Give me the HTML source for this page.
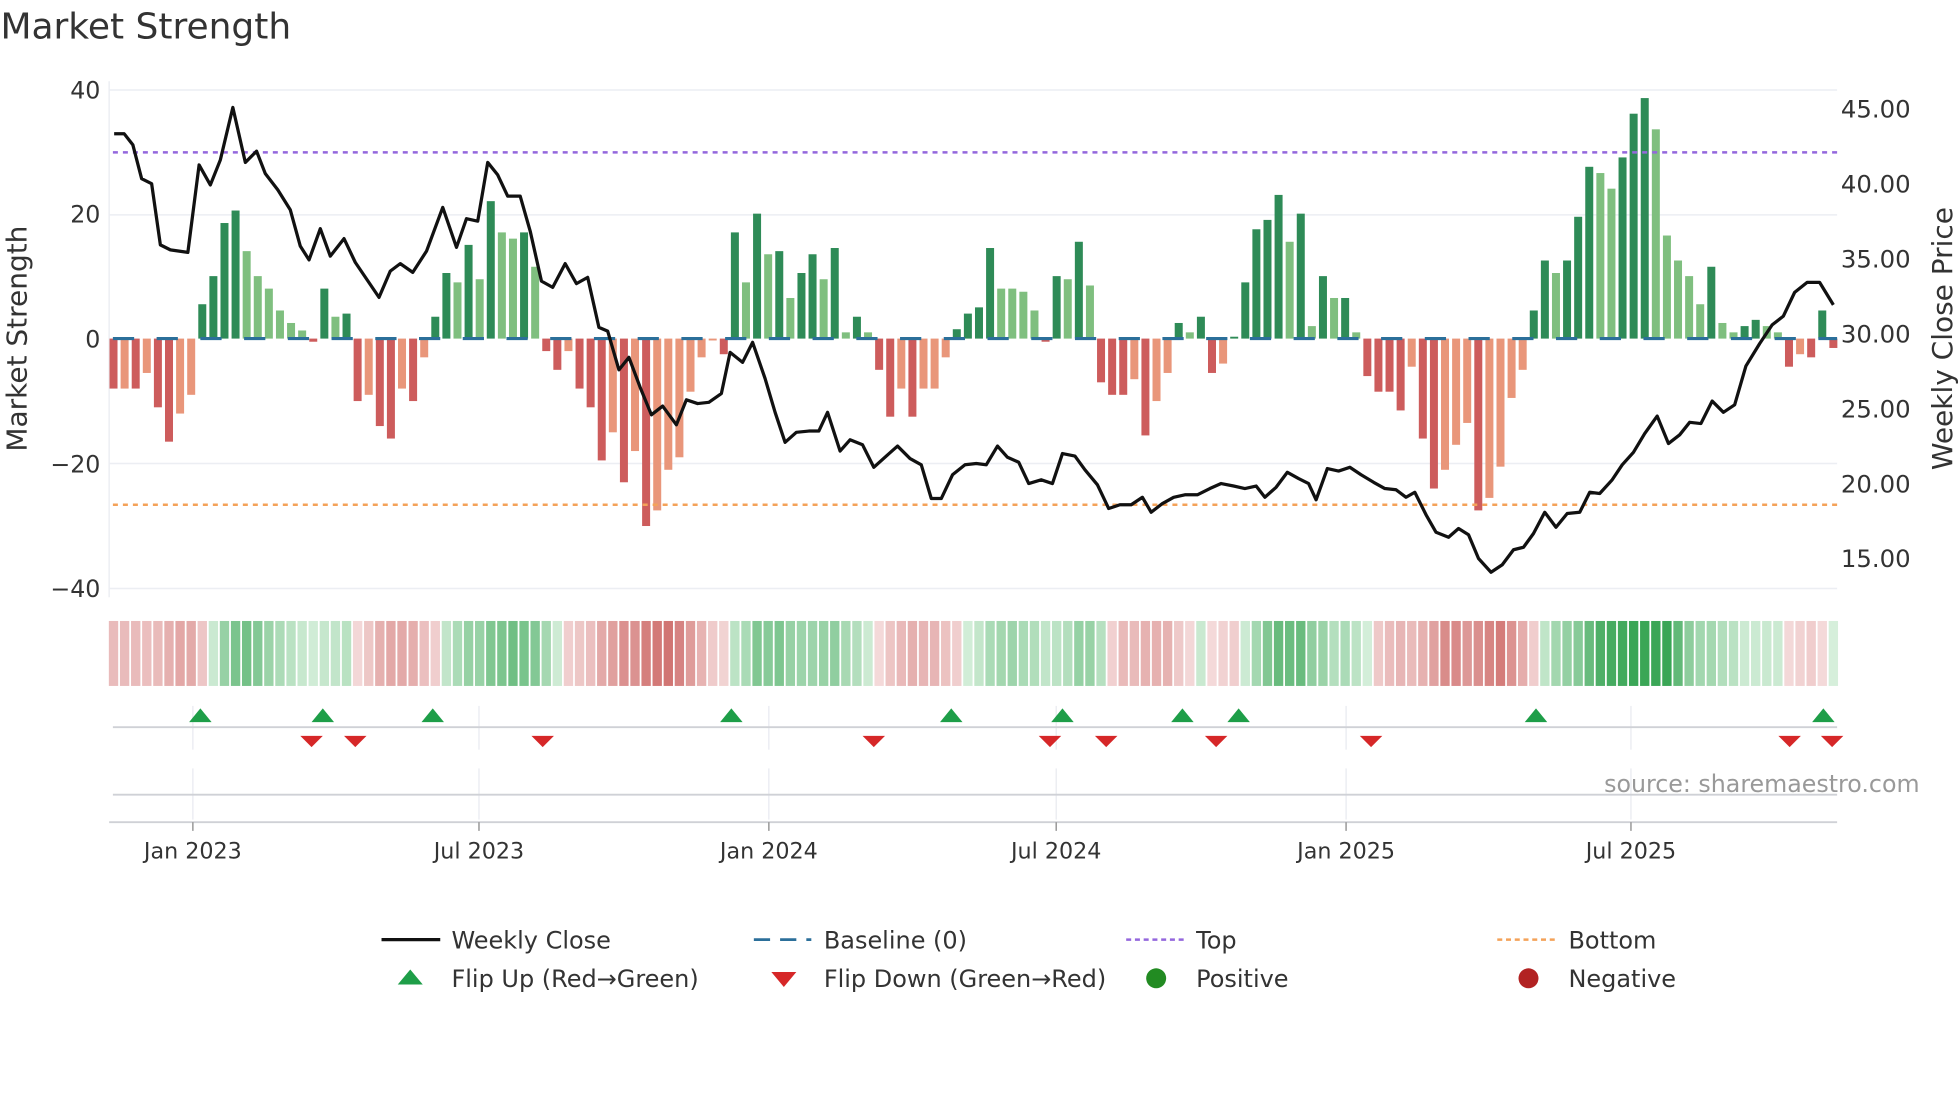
<!DOCTYPE html>
<html><head><meta charset="utf-8">
<style>
html,body{margin:0;padding:0;background:#fff;}
svg{display:block;font-family:"DejaVu Sans","Liberation Sans",sans-serif;}
</style></head>
<body>
<svg id="s" width="1960" height="1102" viewBox="0 0 1568 882" xmlns="http://www.w3.org/2000/svg">
<rect width="1568" height="882" fill="#fff"/>
<text x="0" y="31" font-size="28.8" fill="#333">Market Strength</text>
<g stroke="#eceef3" stroke-width="1.2">
<line x1="87" y1="72" x2="1470" y2="72"/>
<line x1="87" y1="172" x2="1470" y2="172"/>
<line x1="87" y1="371" x2="1470" y2="371"/>
<line x1="87" y1="471" x2="1470" y2="471"/>
<line x1="87" y1="65" x2="87" y2="478"/>
</g>
<g font-size="19" fill="#333" text-anchor="end">
<text x="80" y="79">40</text><text x="80" y="178">20</text><text x="80" y="278">0</text>
<text x="80" y="378">−20</text><text x="80" y="478">−40</text>
</g>
<g font-size="19.5" fill="#333">
<text x="1473" y="94">45.00</text><text x="1473" y="154">40.00</text><text x="1473" y="214">35.00</text>
<text x="1473" y="274">30.00</text><text x="1473" y="334">25.00</text><text x="1473" y="394">20.00</text>
<text x="1473" y="454">15.00</text>
</g>
<text transform="translate(21,271) rotate(-90)" font-size="22.4" fill="#333" text-anchor="middle">Market Strength</text>
<text transform="translate(1562,271) rotate(-90)" font-size="22.4" fill="#333" text-anchor="middle">Weekly Close Price</text>
<g id="bars"></g>
<line x1="90" y1="271" x2="1470" y2="271" stroke="#2b6f9a" stroke-width="2.5" stroke-dasharray="17 18"/>
<line x1="90" y1="122" x2="1470" y2="122" stroke="#9467dd" stroke-width="2" stroke-dasharray="4 4"/>
<line x1="90" y1="404" x2="1470" y2="404" stroke="#f4a259" stroke-width="2" stroke-dasharray="4 4"/>
<polyline fill="none" stroke="#111" stroke-width="2.6" stroke-linejoin="round" points="91,107 99,107 106,116 113,143 121,147 128,196 136,200 150,202 159,132 168,148 176,128 186,86 196,130 205,121 212,139 222,152 232,168 240,197 247,208 256,183 264,205 275,191 284,210 303,238 312,217 320,211 330,218 341,201 354,166 365,198 373,175 382,177 390,130 398,140 406,157 416,157 424,185 433,225 442,230 452,211 461,227 470,222 479,262 486,265 495,296 503,286 512,310 521,332 530,325 541,340 549,320 558,323 567,322 577,315 584,282 594,290 602,274 612,303 620,330 628,354 637,346 647,345 655,345 662,330 672,361 680,352 690,356 699,374 709,365 718,357 728,367 737,372 745,399 753,399 762,380 772,372 781,371 789,372 798,357 806,366 815,370 823,387 833,384 842,387 850,363 860,365 868,376 878,388 887,407 896,404 905,404 914,398 921,410 930,403 939,398 948,396 958,396 968,391 977,387 987,389 996,391 1005,389 1012,398 1021,390 1030,378 1039,383 1047,387 1053,400 1062,375 1071,377 1080,374 1089,380 1099,386 1108,391 1117,392 1125,398 1132,394 1141,412 1149,426 1159,430 1167,423 1175,428 1183,447 1193,458 1202,452 1211,440 1219,438 1227,427 1236,410 1245,422 1254,411 1264,410 1272,394 1280,395 1290,384 1298,372 1307,362 1316,347 1326,333 1335,355 1344,348 1352,338 1361,339 1370,321 1379,330 1388,324 1397,293 1408,275 1418,260 1427,253 1436,234 1446,226 1456,226 1467,244"/>
<g id="strip"></g>
<g stroke="#e8eaf0" stroke-width="1">
<line x1="154" y1="565" x2="154" y2="600"/><line x1="383" y1="565" x2="383" y2="600"/><line x1="615" y1="565" x2="615" y2="600"/><line x1="845" y1="565" x2="845" y2="600"/><line x1="1077" y1="565" x2="1077" y2="600"/><line x1="1305" y1="565" x2="1305" y2="600"/>
<line x1="154" y1="615" x2="154" y2="656"/><line x1="383" y1="615" x2="383" y2="656"/><line x1="615" y1="615" x2="615" y2="656"/><line x1="845" y1="615" x2="845" y2="656"/><line x1="1077" y1="615" x2="1077" y2="656"/><line x1="1305" y1="615" x2="1305" y2="656"/>
</g>
<line x1="90" y1="582" x2="1470" y2="582" stroke="#cfd1d6" stroke-width="1.5"/>
<line x1="90" y1="636" x2="1470" y2="636" stroke="#cfd1d6" stroke-width="1.5"/>
<line x1="87" y1="658" x2="1470" y2="658" stroke="#cfd1d6" stroke-width="1.5"/>
<g stroke="#999" stroke-width="1.2">
<line x1="154" y1="658" x2="154" y2="665"/><line x1="383" y1="658" x2="383" y2="665"/><line x1="615" y1="658" x2="615" y2="665"/><line x1="845" y1="658" x2="845" y2="665"/><line x1="1077" y1="658" x2="1077" y2="665"/><line x1="1305" y1="658" x2="1305" y2="665"/>
</g>
<g id="flips"></g>
<text x="1536" y="634" font-size="19" fill="#999" text-anchor="end">source: sharemaestro.com</text>
<g font-size="17.8" fill="#333" text-anchor="middle">
<text x="154" y="687">Jan 2023</text><text x="383" y="687">Jul 2023</text><text x="615" y="687">Jan 2024</text>
<text x="845" y="687">Jul 2024</text><text x="1077" y="687">Jan 2025</text><text x="1305" y="687">Jul 2025</text>
</g>
<g font-size="19.2" fill="#333">
<line x1="305" y1="752" x2="352" y2="752" stroke="#111" stroke-width="2.6"/>
<text x="361" y="759">Weekly Close</text>
<line x1="603" y1="752" x2="649" y2="752" stroke="#2b6f9a" stroke-width="2.2" stroke-dasharray="13 8"/>
<text x="659" y="759">Baseline (0)</text>
<line x1="901" y1="752" x2="947" y2="752" stroke="#9467dd" stroke-width="2" stroke-dasharray="4 3"/>
<text x="957" y="759">Top</text>
<line x1="1198" y1="752" x2="1244" y2="752" stroke="#f4a259" stroke-width="2" stroke-dasharray="4 3"/>
<text x="1255" y="759">Bottom</text>
<polygon points="318,788 338,788 328,776" fill="#1e9e48"/>
<text x="361" y="790">Flip Up (Red→Green)</text>
<polygon points="617,778 637,778 627,790" fill="#d62728"/>
<text x="659" y="790">Flip Down (Green→Red)</text>
<circle cx="925" cy="783" r="8" fill="#228b22"/>
<text x="957" y="790">Positive</text>
<circle cx="1223" cy="783" r="8" fill="#b22222"/>
<text x="1255" y="790">Negative</text>
</g>
</svg>
<script>
var NS="http://www.w3.org/2000/svg";
var B="-8d -8l -8d -5.5l -11d -16.5d -12l -9l 5.5d 10d 18.5d 20.5d 14l 10l 8l 4.5l 2.5l 1.3l -0.5d 8d 3.5l 4d -10d -9l -14d -16d -8l -10d -3l 3.5d 10.5d 9l 15d 9.5l 22d 17l 16l 17d 11.5l -2d -5d -2l -8d -11d -19.5d -15l -23d -18l -30d -27.5l -21l -19l -8.5l -3l -0.3l -2.5d 17d 9l 20d 13.5l 14d 6.5l 10.5d 13.5d 9.5l 14.5d 1l 3.5d 1l -5d -12.5d -8l -12.5d -8l -8l -3l 1.5d 4d 5d 14.5d 8l 8l 7.5l 4.5l -0.5d 10d 9.5l 15.5d 8.5l -7d -9d -9d -6.5l -15.5d -10l -5.5l 2.5d 1l 3.5d -5.5d -4l 0.3d 9d 17.5d 19d 23d 15.5l 20d 2l 10d 6.5l 6.5d 1l -6d -8.5d -8.5d -11.5d -4.5l -16d -24d -21l -17l -13.5l -27.5d -25.5l -20.5l -9.5l -5l 4.5d 12.5d 10.5l 12.5d 19.5d 27.5d 26.5l 24l 29d 36d 38.5d 33.5l 16.5l 12.5l 10l 5.5l 11.5d 2.5l 1l 2d 3d 2l 1l -4.5d -2.5l -3d 4.5d -1.5d".split(" ");
var n=B.length,x0=90.5,x1=1467,step=(x1-x0)/(n-1),w=6.4;
var bars=document.getElementById("bars"),strip=document.getElementById("strip");
function mix(a,b,t){var r="#";for(var i=0;i<3;i++){var c=Math.round(parseInt(a.substr(1+2*i,2),16)*(1-t)+parseInt(b.substr(1+2*i,2),16)*t);r+=(c<16?"0":"")+c.toString(16);}return r;}
var sm=[];
for(var i=0;i<n;i++){sm.push(parseFloat(B[i]));}
for(var i=0;i<n;i++){
 var v=parseFloat(B[i]),t=B[i].slice(-1),cx=x0+i*step;
 var col=v>=0?(t=="d"?"#2e8b57":"#7fbf7f"):(t=="d"?"#cd5c5c":"#e9967a");
 var r=document.createElementNS(NS,"rect");
 var h=Math.max(Math.abs(v)*5,1.2);
 r.setAttribute("x",cx-w/2);r.setAttribute("width",w);
 r.setAttribute("y",v>=0?271-h:271);r.setAttribute("height",h);r.setAttribute("fill",col);
 bars.appendChild(r);
 var a=0,c=0;for(var k=i-2;k<=i;k++){if(k>=0){a+=sm[k];c++;}}a/=c;
 var tt=Math.min(Math.abs(a)/28,1);
 var sc=a>=0?mix("#d6efdb","#3aa656",tt):mix("#f4dada","#cf6e6c",tt);
 var s=document.createElementNS(NS,"rect");
 s.setAttribute("x",cx-step/2+0.7);s.setAttribute("width",step-1.4);
 s.setAttribute("y",497);s.setAttribute("height",52);s.setAttribute("fill",sc);
 strip.appendChild(s);
}
var fl=document.getElementById("flips");
[160,258,346,585,761,850,946,991,1229,1459].forEach(function(x){var p=document.createElementNS(NS,"polygon");p.setAttribute("points",(x-9)+",578 "+(x+9)+",578 "+x+",567");p.setAttribute("fill","#1e9e48");fl.appendChild(p);});
[249,284,434,699,840,885,973,1097,1432,1466].forEach(function(x){var p=document.createElementNS(NS,"polygon");p.setAttribute("points",(x-9)+",589 "+(x+9)+",589 "+x+",598");p.setAttribute("fill","#d62728");fl.appendChild(p);});
</script>
</body></html>
